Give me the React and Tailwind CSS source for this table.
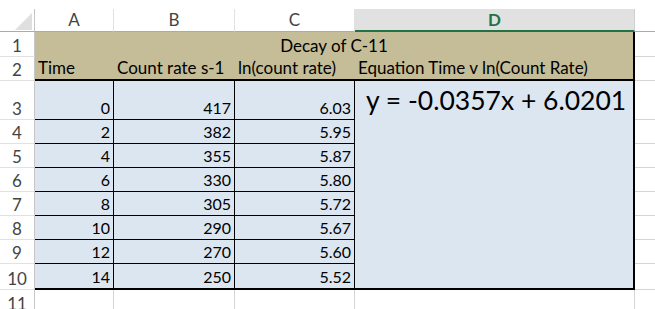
import React from "react";

const FONT = { fontFamily: "Lato, 'Open Sans', sans-serif" };

const rows = [
  [0, 417, "6.03"],
  [2, 382, "5.95"],
  [4, 355, "5.87"],
  [6, 330, "5.80"],
  [8, 305, "5.72"],
  [10, 290, "5.67"],
  [12, 270, "5.60"],
  [14, 250, "5.52"],
];

function RowHead({ n, cls = "" }) {
  return (
    <div className={`flex items-end justify-center pb-[1px] text-[17px] leading-[18px] text-[#444] border-r border-r-[#c6c6c6] border-b border-b-[#e1e1e1] ${cls}`}>
      {n}
    </div>
  );
}

export default function App() {
  return (
    <div className="w-[655px] h-[309px] bg-white overflow-hidden pt-[9px] text-black" style={FONT}>
      <div className="grid grid-cols-[35px_79px_121px_120px_280px_20px] grid-rows-[23px_25px_24px_39px_24px_24px_24px_24px_24px_24px_26px_30px]">
        {/* column headers */}
        <div className="relative border-r border-r-[#c6c6c6] border-b border-b-[#ababab]">
          <svg className="absolute left-[15px] top-[4px]" width="17" height="17" viewBox="0 0 17 17">
            <polygon points="17,0 17,17 0,17" fill="#dfdfdf" />
          </svg>
        </div>
        <div className="flex items-center justify-center text-[17px] text-[#444] border-r border-r-[#e1e1e1] border-b border-b-[#ababab]">A</div>
        <div className="flex items-center justify-center text-[17px] text-[#444] border-r border-r-[#e1e1e1] border-b border-b-[#ababab]">B</div>
        <div className="flex items-center justify-center text-[17px] text-[#444] border-r border-r-[#e1e1e1] border-b border-b-[#ababab]">C</div>
        <div className="flex items-center justify-center text-[17px] font-bold text-[#217346] bg-[#e1e1e1] border-b-2 border-b-[#217346] border-r border-r-[#d0d0d0]">D</div>
        <div className="border-b border-b-[#ababab]"></div>

        {/* row 1 */}
        <RowHead n={1} />
        <div className="col-span-4 flex items-end justify-center pb-[2px] text-[17px] leading-[18px] bg-[#c4bd97] border-r-2 border-r-black">
          Decay of C-11
        </div>
        <div className="border-b border-b-[#d4d4d4]"></div>

        {/* row 2 */}
        <RowHead n={2} />
        <div className="flex items-end pl-[3px] pb-[2px] text-[17px] leading-[18px] bg-[#c4bd97] border-b-2 border-b-black whitespace-nowrap">Time</div>
        <div className="flex items-end pl-[3px] pb-[2px] text-[17px] leading-[18px] bg-[#c4bd97] border-b-2 border-b-black whitespace-nowrap">Count rate s-1</div>
        <div className="flex items-end pl-[3px] pb-[2px] text-[17px] leading-[18px] bg-[#c4bd97] border-b-2 border-b-black whitespace-nowrap">ln(count rate)</div>
        <div className="flex items-end pl-[3px] pb-[2px] text-[17px] leading-[18px] bg-[#c4bd97] border-b-2 border-b-black border-r-2 border-r-black whitespace-nowrap">Equation Time v ln(Count Rate)</div>
        <div className="border-b border-b-[#d4d4d4]"></div>

        {/* data rows */}
        {rows.map((r, i) => {
          const last = i === rows.length - 1;
          const b = last ? "border-b-2 border-b-black" : "border-b border-b-black";
          const cells = [];
          cells.push(<RowHead key={`h${i}`} n={i + 3} />);
          cells.push(
            <div key={`a${i}`} className={`flex items-end justify-end pr-[3px] pb-[2px] text-[16px] leading-[18px] bg-[#dce6f1] border-r border-r-black ${b}`}>{r[0]}</div>
          );
          cells.push(
            <div key={`b${i}`} className={`flex items-end justify-end pr-[3px] pb-[2px] text-[16px] leading-[18px] bg-[#dce6f1] border-r border-r-black ${b}`}>{r[1]}</div>
          );
          cells.push(
            <div key={`c${i}`} className={`flex items-end justify-end pr-[3px] pb-[2px] text-[16px] leading-[18px] bg-[#dce6f1] border-r border-r-black ${b}`}>{r[2]}</div>
          );
          if (i === 0) {
            cells.push(
              <div key="d" className="row-span-8 bg-[#dce6f1] border-r-2 border-r-black border-b-2 border-b-black pl-[11px] pt-[4px] text-[26.5px] leading-[30px] whitespace-nowrap">
                y = -0.0357x + 6.0201
              </div>
            );
          }
          cells.push(<div key={`e${i}`} className="border-b border-b-[#d4d4d4]"></div>);
          return cells;
        })}

        {/* row 11 */}
        <div className="flex items-start justify-center pt-[5px] text-[17px] leading-[18px] text-[#444] border-r border-r-[#c6c6c6]">
          11
        </div>
        <div className="border-r border-r-[#d4d4d4]"></div>
        <div className="border-r border-r-[#d4d4d4]"></div>
        <div className="border-r border-r-[#d4d4d4]"></div>
        <div className="border-r border-r-[#d4d4d4]"></div>
        <div></div>
      </div>
    </div>
  );
}
